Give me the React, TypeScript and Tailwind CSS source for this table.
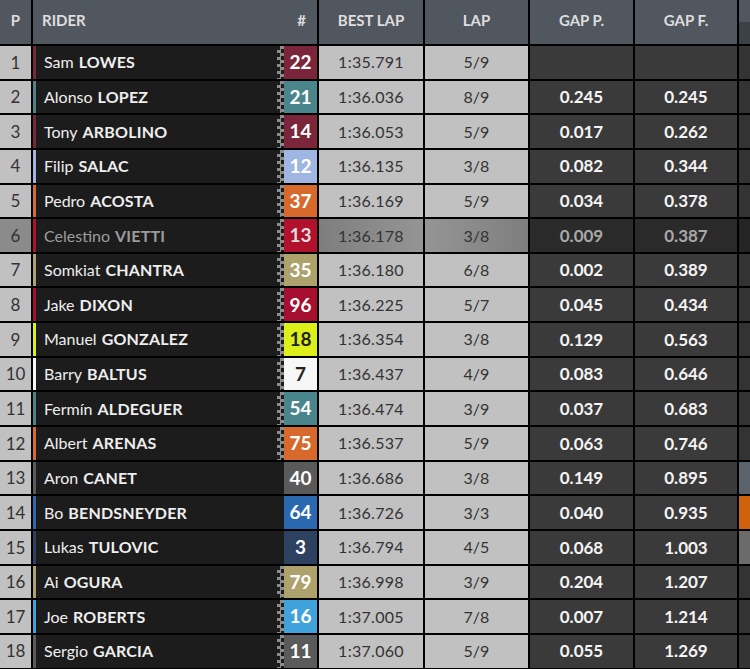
import React from 'react'

type Rider = {
  pos: number
  first: string
  last: string
  num: string
  color: string
  dark?: boolean
  best: string
  lap: string
  gapP: string
  gapF: string
  flag?: boolean
  side?: string
}

const riders: Rider[] = [
  { pos: 1, first: 'Sam', last: 'LOWES', num: '22', color: 'bg-[#7a2539]', best: '1:35.791', lap: '5/9', gapP: '', gapF: '', flag: true },
  { pos: 2, first: 'Alonso', last: 'LOPEZ', num: '21', color: 'bg-[#4b858c]', best: '1:36.036', lap: '8/9', gapP: '0.245', gapF: '0.245', flag: true },
  { pos: 3, first: 'Tony', last: 'ARBOLINO', num: '14', color: 'bg-[#7a2539]', best: '1:36.053', lap: '5/9', gapP: '0.017', gapF: '0.262', flag: true },
  { pos: 4, first: 'Filip', last: 'SALAC', num: '12', color: 'bg-[#9fb6e2]', best: '1:36.135', lap: '3/8', gapP: '0.082', gapF: '0.344', flag: true },
  { pos: 5, first: 'Pedro', last: 'ACOSTA', num: '37', color: 'bg-[#d8692d]', best: '1:36.169', lap: '5/9', gapP: '0.034', gapF: '0.378', flag: true },
  { pos: 6, first: 'Celestino', last: 'VIETTI', num: '13', color: 'bg-[#b1112d]', best: '1:36.178', lap: '3/8', gapP: '0.009', gapF: '0.387', flag: true },
  { pos: 7, first: 'Somkiat', last: 'CHANTRA', num: '35', color: 'bg-[#ada26b]', best: '1:36.180', lap: '6/8', gapP: '0.002', gapF: '0.389', flag: true },
  { pos: 8, first: 'Jake', last: 'DIXON', num: '96', color: 'bg-[#a60f30]', best: '1:36.225', lap: '5/7', gapP: '0.045', gapF: '0.434', flag: true },
  { pos: 9, first: 'Manuel', last: 'GONZALEZ', num: '18', color: 'bg-[#ddf01a]', dark: true, best: '1:36.354', lap: '3/8', gapP: '0.129', gapF: '0.563', flag: true },
  { pos: 10, first: 'Barry', last: 'BALTUS', num: '7', color: 'bg-[#f7f7f7]', dark: true, best: '1:36.437', lap: '4/9', gapP: '0.083', gapF: '0.646', flag: true },
  { pos: 11, first: 'Fermín', last: 'ALDEGUER', num: '54', color: 'bg-[#4b858c]', best: '1:36.474', lap: '3/9', gapP: '0.037', gapF: '0.683', flag: true },
  { pos: 12, first: 'Albert', last: 'ARENAS', num: '75', color: 'bg-[#d8692d]', best: '1:36.537', lap: '5/9', gapP: '0.063', gapF: '0.746', flag: true },
  { pos: 13, first: 'Aron', last: 'CANET', num: '40', color: 'bg-[#5a5a5a]', best: '1:36.686', lap: '3/8', gapP: '0.149', gapF: '0.895', side: 'bg-[#5b636d]' },
  { pos: 14, first: 'Bo', last: 'BENDSNEYDER', num: '64', color: 'bg-[#2a68b0]', best: '1:36.726', lap: '3/3', gapP: '0.040', gapF: '0.935', side: 'bg-[#d0620e]' },
  { pos: 15, first: 'Lukas', last: 'TULOVIC', num: '3', color: 'bg-[#2d4160]', best: '1:36.794', lap: '4/5', gapP: '0.068', gapF: '1.003', side: 'bg-[#6b6b6b]' },
  { pos: 16, first: 'Ai', last: 'OGURA', num: '79', color: 'bg-[#ada26b]', best: '1:36.998', lap: '3/9', gapP: '0.204', gapF: '1.207', flag: true },
  { pos: 17, first: 'Joe', last: 'ROBERTS', num: '16', color: 'bg-[#3fa2dc]', best: '1:37.005', lap: '7/8', gapP: '0.007', gapF: '1.214', flag: true },
  { pos: 18, first: 'Sergio', last: 'GARCIA', num: '11', color: 'bg-[#5a5a5a]', best: '1:37.060', lap: '5/9', gapP: '0.055', gapF: '1.269', flag: true },
]

const grid = 'grid grid-cols-[31px_284px_104px_103px_103px_102px_1fr] gap-x-[2px]'

const Row = ({ r }: { r: Rider }) => {
  const out = r.pos === 6
  return (
    <div className={`${grid} h-[32.65px]`}>
      <div className={`flex items-center justify-center text-[17px] text-[#333] ${out ? 'bg-[#8b8b8b]' : 'bg-[#c1c1c1]'}`}>{r.pos}</div>
      <div className='flex'>
        <div className={`w-[3px] ${r.color}`} />
        <div className={`flex-1 flex items-center pl-[8px] bg-[#1c1c1c] text-[16px] ${out ? 'text-[#9c9c9c]' : 'text-[#eeeeee]'}`}>
          <span>{r.first}</span>
          <span className='font-bold ml-[5px] tracking-[0.2px]'>{r.last}</span>
        </div>
        <div className={`w-[7px] bg-[#1c1c1c] ${r.flag ? 'bg-[repeating-conic-gradient(#8d8d8d_0_25%,#1c1c1c_0_50%)] bg-[length:7px_7px]' : ''}`} />
        <div className={`w-[33px] flex items-center justify-center text-[19px] font-bold ${r.color} ${r.dark ? 'text-[#222]' : out ? 'text-[#dddddd]' : 'text-white'}`}>{r.num}</div>
      </div>
      <div className={`flex items-center justify-center text-[16px] text-[#333] tracking-[0.3px] ${out ? 'bg-[linear-gradient(90deg,#7e7e7e,#959595)]' : 'bg-[#c1c1c1]'}`}>{r.best}</div>
      <div className={`flex items-center justify-center text-[16px] text-[#333] ${out ? 'bg-[linear-gradient(90deg,#959595,#7e7e7e)]' : 'bg-[#c1c1c1]'}`}>{r.lap}</div>
      <div className={`flex items-center justify-center text-[17px] font-bold ${out ? 'bg-[#2a2a2a] text-[#a8a8a8]' : 'bg-[#3a3a3a] text-[#f4f4f4]'}`}>{r.gapP}</div>
      <div className={`flex items-center justify-center text-[17px] font-bold ${out ? 'bg-[#2a2a2a] text-[#a8a8a8]' : 'bg-[#3a3a3a] text-[#f4f4f4]'}`}>{r.gapF}</div>
      <div className={r.side ?? (out ? 'bg-[#242424]' : 'bg-[#333333]')} />
    </div>
  )
}

export default function App() {
  return (
    <div className='w-[750px] h-[669px] overflow-hidden bg-black flex flex-col gap-y-[2px]' style={{ fontFamily: 'Lato, "Open Sans", sans-serif' }}>
      <div className={`${grid} h-[44px] text-[15px] font-bold text-[#dedede]`}>
        <div className='bg-[#51575f] flex items-center justify-center pb-[3px]'>P</div>
        <div className='bg-[#51575f] flex items-center justify-between pl-[9px] pr-[11px] pb-[3px]'>
          <span>RIDER</span>
          <span>#</span>
        </div>
        <div className='bg-[#51575f] flex items-center justify-center pb-[3px]'>BEST LAP</div>
        <div className='bg-[#51575f] flex items-center justify-center pb-[3px]'>LAP</div>
        <div className='bg-[#51575f] flex items-center justify-center pb-[3px]'>GAP P.</div>
        <div className='bg-[#51575f] flex items-center justify-center pb-[3px]'>GAP F.</div>
        <div className='flex flex-col'>
          <div className='h-[22px] bg-[#51575f]' />
          <div className='flex-1 bg-[#3c4147]' />
        </div>
      </div>
      {riders.map((r) => (
        <Row key={r.pos} r={r} />
      ))}
    </div>
  )
}
